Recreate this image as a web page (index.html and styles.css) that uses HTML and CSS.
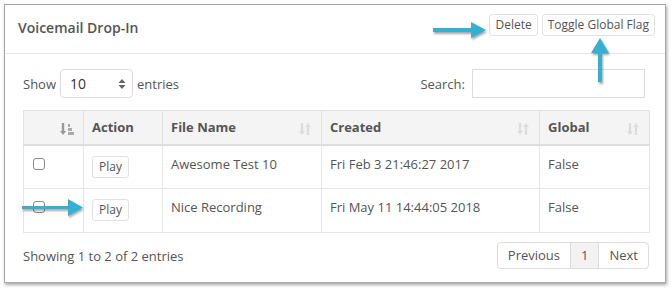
FILE: index.html
```html
<!DOCTYPE html>
<html>
<head>
<meta charset="utf-8">
<link rel="stylesheet" href="styles.css">
</head>
<body>
<div class="panel">
  <div class="panel-head">
    <div class="title">Voicemail Drop-In</div>
    <div class="actions">
      <button class="btn">Delete</button>
      <button class="btn">Toggle Global Flag</button>
    </div>
  </div>
  <div class="panel-body">
    <div class="controls">
      <div class="length">
        <span>Show</span>
        <div class="select"><span>10</span>
          <svg width="8" height="12" viewBox="0 0 8 12"><path d="M4 1 L7.5 5 L0.5 5 Z M4 11 L7.5 7 L0.5 7 Z" fill="#666"/></svg>
        </div>
        <span>entries</span>
      </div>
      <div class="search">
        <span>Search:</span>
        <div class="input"></div>
      </div>
    </div>
    <table class="grid">
      <colgroup>
        <col class="w1"><col class="w2"><col class="w3"><col class="w4"><col class="w5">
      </colgroup>
      <thead>
        <tr>
          <th><span class="sort"><svg width="14" height="14" viewBox="0 0 14 14"><path d="M3 1 V10" stroke="#999" stroke-width="2.4"/><path d="M0 9 L3 13 L6 9 Z" fill="#999"/><rect x="8" y="2" width="2" height="3" fill="#aaa"/><rect x="8" y="6" width="4" height="3" fill="#aaa"/><rect x="8" y="10" width="6" height="3" fill="#aaa"/></svg></span></th>
          <th>Action</th>
          <th>File Name<span class="sort"><svg width="14" height="14" viewBox="0 0 14 14"><path d="M4 1 V10" stroke="#ddd" stroke-width="2.4"/><path d="M1 9 L4 13 L7 9 Z" fill="#ddd"/><path d="M10 4 V13" stroke="#ddd" stroke-width="2.4"/><path d="M7 5 L10 1 L13 5 Z" fill="#ddd"/></svg></span></th>
          <th>Created<span class="sort"><svg width="14" height="14" viewBox="0 0 14 14"><path d="M4 1 V10" stroke="#ddd" stroke-width="2.4"/><path d="M1 9 L4 13 L7 9 Z" fill="#ddd"/><path d="M10 4 V13" stroke="#ddd" stroke-width="2.4"/><path d="M7 5 L10 1 L13 5 Z" fill="#ddd"/></svg></span></th>
          <th>Global<span class="sort"><svg width="14" height="14" viewBox="0 0 14 14"><path d="M4 1 V10" stroke="#ddd" stroke-width="2.4"/><path d="M1 9 L4 13 L7 9 Z" fill="#ddd"/><path d="M10 4 V13" stroke="#ddd" stroke-width="2.4"/><path d="M7 5 L10 1 L13 5 Z" fill="#ddd"/></svg></span></th>
        </tr>
      </thead>
      <tbody>
        <tr>
          <td class="chk"><span class="box"></span></td>
          <td><button class="btn play">Play</button></td>
          <td>Awesome Test 10</td>
          <td>Fri Feb 3 21:46:27 2017</td>
          <td>False</td>
        </tr>
        <tr>
          <td class="chk"><span class="box"></span></td>
          <td><button class="btn play">Play</button></td>
          <td>Nice Recording</td>
          <td>Fri May 11 14:44:05 2018</td>
          <td>False</td>
        </tr>
      </tbody>
    </table>
    <div class="footer">
      <span>Showing 1 to 2 of 2 entries</span>
      <div class="pager">
        <span class="pg">Previous</span>
        <span class="pg active">1</span>
        <span class="pg">Next</span>
      </div>
    </div>
  </div>
</div>
<svg class="arrow a1" width="60" height="24" viewBox="0 0 60 24"><path d="M2 10 H40 V4 L55 12 L40 20 V14 H2 Z" fill="#33b0d2"/></svg>
<svg class="arrow a2" width="24" height="50" viewBox="0 0 24 50"><path d="M10 46 V17 H3 L12 2 L21 17 H14 V46 Z" fill="#33b0d2"/></svg>
<svg class="arrow a3" width="70" height="24" viewBox="0 0 70 24"><path d="M2 10 H48 V3 L63 11.5 L48 20 V13 H2 Z" fill="#33b0d2"/></svg>
</body>
</html>
```

FILE: styles.css
```css
html, body {
  margin: 0;
  padding: 0;
  background: #fff;
}
body {
  padding: 4px 0 0 4px;
  font-family: "Open Sans", "Liberation Sans", sans-serif;
  font-size: 13px;
  color: #555;
  position: relative;
  width: 671px;
  height: 289px;
  box-sizing: border-box;
  overflow: hidden;
}
.panel {
  width: 662px;
  height: 279px;
  box-sizing: border-box;
  border: 1px solid #a8a8a8;
  box-shadow: 1px 2px 3px rgba(0,0,0,0.35);
  background: #fff;
}
.panel-head {
  height: 48px;
  border-bottom: 1px solid #e6e6e6;
  display: flex;
  align-items: center;
  justify-content: space-between;
  padding: 0 10px 0 13px;
}
.title {
  font-size: 14px;
  font-weight: 600;
  color: #555;
  margin-top: -4px;
}
.actions {
  display: flex;
  gap: 4px;
  margin-top: -8px;
}
.btn {
  font-family: "Open Sans", "Liberation Sans", sans-serif;
  font-size: 12px;
  color: #555;
  background: #fff;
  border: 1px solid #e2e2e2;
  border-radius: 3px;
  height: 22px;
  padding: 0 5px;
  line-height: 20px;
}
.panel-body {
  padding: 15px 16px 0 18px;
}
.controls {
  display: flex;
  justify-content: space-between;
  align-items: center;
  height: 29px;
}
.length, .search {
  display: flex;
  align-items: center;
  gap: 4px;
}
.select {
  width: 73px;
  height: 29px;
  box-sizing: border-box;
  border: 1px solid #ddd;
  border-radius: 4px;
  display: flex;
  align-items: center;
  justify-content: space-between;
  padding: 0 6px 0 9px;
  font-size: 14px;
  color: #333;
}
.search { gap: 7px; margin-right: 4px; }
.input {
  width: 173px;
  height: 29px;
  box-sizing: border-box;
  border: 1px solid #ddd;
}
.grid {
  margin-top: 12px;
  width: 626px;
  table-layout: fixed;
  border-collapse: collapse;
  border: 1px solid #e2e2e2;
}
.w1 { width: 60px; }
.w2 { width: 79px; }
.w3 { width: 159px; }
.w4 { width: 218px; }
.w5 { width: 110px; }
.grid th {
  background: #f4f4f4;
  font-weight: 700;
  text-align: left;
  height: 34px;
  box-sizing: border-box;
  padding: 0 8px;
  border: 1px solid #e2e2e2;
  border-bottom: 2px solid #dedede;
  position: relative;
  color: #555;
}
.grid th .sort {
  position: absolute;
  right: 9px;
  top: 11px;
  line-height: 0;
}
.grid th:first-child .sort { right: 9px; }
.grid td {
  height: 44px;
  box-sizing: border-box;
  border: 1px solid #e6e6e6;
  padding: 9px 8px 0 8px;
  vertical-align: top;
}
.grid td.chk { padding-top: 12px; }
.box {
  display: block;
  width: 12px;
  height: 12px;
  box-sizing: border-box;
  border: 1px solid #8a8a8a;
  border-radius: 3px;
  margin-left: 1px;
}
.play { padding: 0 6px; height: 22px; margin-top: 1px; }
.footer {
  margin-top: 9px;
  display: flex;
  justify-content: space-between;
  align-items: center;
  width: 626px;
}
.pager {
  display: flex;
  border: 1px solid #ddd;
  border-radius: 4px;
  height: 27px;
  box-sizing: border-box;
}
.pg {
  padding: 0 10px;
  line-height: 25px;
  border-left: 1px solid #ddd;
}
.pg:first-child { border-left: none; }
.pg.active { background: #f2f2f2; padding: 0 10px; }
.arrow {
  position: absolute;
  filter: drop-shadow(1px 2px 1px rgba(0,0,0,0.35));
}
.a1 { left: 431px; top: 18px; }
.a2 { left: 588px; top: 36px; }
.a3 { left: 20px; top: 196px; }
```
